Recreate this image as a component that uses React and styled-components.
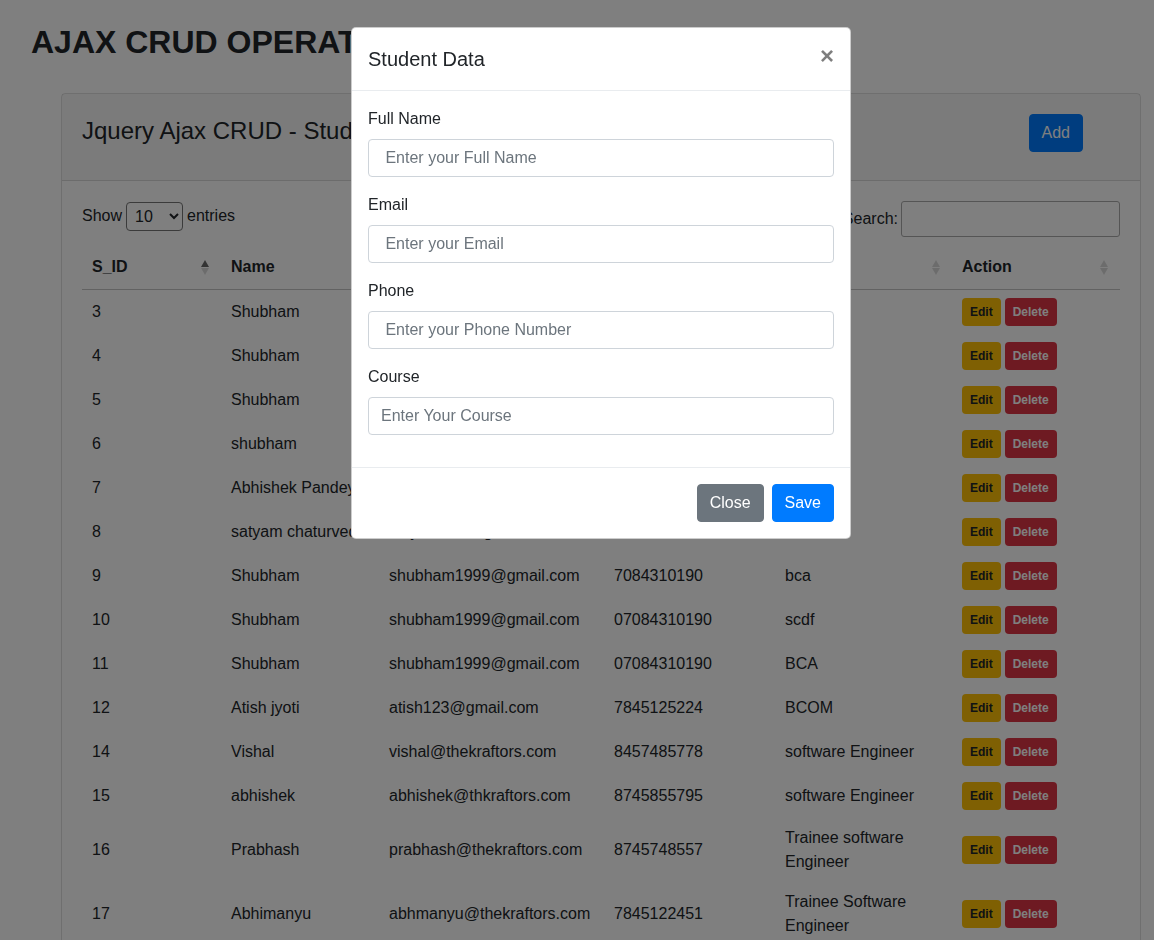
import React from 'react';
import styled, {createGlobalStyle} from 'styled-components';

const GlobalStyle = createGlobalStyle`
	body {
		margin: 0;
		background: #fff;
		color: #212529;
		font-family: "Liberation Sans", Arial, sans-serif;
		font-size: 16px;
		line-height: 1.5;
		overflow: hidden;
	}
	* { box-sizing: border-box; }
`;

const students = [
	{id: 3, name: 'Shubham', email: 'shubham1999@gmail.com', phone: '7084310190', course: 'bca'},
	{id: 4, name: 'Shubham', email: 'shubham1999@gmail.com', phone: '7084310190', course: 'bca'},
	{id: 5, name: 'Shubham', email: 'shubham1999@gmail.com', phone: '7084310190', course: 'BCA'},
	{id: 6, name: 'shubham', email: 'shubham1999@gmail.com', phone: '7084310190', course: 'bca'},
	{id: 7, name: 'Abhishek Pandey', email: 'abhishek@gmail.com', phone: '8745855795', course: 'BCA'},
	{id: 8, name: 'satyam chaturvedi', email: 'satyam123@gmail.com', phone: '7845125224', course: 'BCA'},
	{id: 9, name: 'Shubham', email: 'shubham1999@gmail.com', phone: '7084310190', course: 'bca'},
	{id: 10, name: 'Shubham', email: 'shubham1999@gmail.com', phone: '07084310190', course: 'scdf'},
	{id: 11, name: 'Shubham', email: 'shubham1999@gmail.com', phone: '07084310190', course: 'BCA'},
	{id: 12, name: 'Atish jyoti', email: 'atish123@gmail.com', phone: '7845125224', course: 'BCOM'},
	{id: 14, name: 'Vishal', email: 'vishal@thekraftors.com', phone: '8457485778', course: 'software Engineer'},
	{id: 15, name: 'abhishek', email: 'abhishek@thkraftors.com', phone: '8745855795', course: 'software Engineer'},
	{id: 16, name: 'Prabhash', email: 'prabhash@thekraftors.com', phone: '8745748557', course: 'Trainee software Engineer'},
	{id: 17, name: 'Abhimanyu', email: 'abhmanyu@thekraftors.com', phone: '7845122451', course: 'Trainee Software Engineer'},
];

const columns = [
	{label: 'S_ID', width: 139, sorted: true},
	{label: 'Name', width: 158},
	{label: 'Email', width: 225},
	{label: 'Phone', width: 171},
	{label: 'Course', width: 177},
	{label: 'Action', width: 168},
];

const Page = styled.div`
	padding-top: 23px;
`;

const PageTitle = styled.h2`
	margin: 0 0 0 31px;
	font-size: 32px;
	font-weight: 700;
	line-height: 1.2;
`;

const Card = styled.div`
	margin: 32px 0 0 61px;
	width: 1080px;
	border: 1px solid rgba(0,0,0,.125);
	border-radius: 4px;
`;

const CardHeader = styled.div`
	display: flex;
	align-items: flex-start;
	height: 87px;
	padding: 20px 20px 0;
	background: rgba(0,0,0,.03);
	border-bottom: 1px solid rgba(0,0,0,.125);
`;

const CardTitle = styled.h4`
	margin: 3px 0 0;
	font-size: 24px;
	font-weight: 400;
	line-height: 1.2;
`;

const AddButton = styled.button`
	margin: 0 37px 0 auto;
	padding: 6px 12px;
	background: #007bff;
	border: 1px solid #007bff;
	border-radius: 4px;
	color: #fff;
	font: inherit;
	line-height: 24px;
`;

const CardBody = styled.div`
	padding: 20px;
`;

const Controls = styled.div`
	display: flex;
	justify-content: space-between;
	align-items: center;
	height: 36px;
`;

const LengthLabel = styled.label`
	display: flex;
	align-items: center;
	margin-top: -6px;
	gap: 4px;
`;

const LengthSelect = styled.select`
	width: 57px;
	height: 29px;
	padding: 0 4px;
	font-family: "Liberation Sans", Arial, sans-serif;
	font-size: 16px;
	border: 1px solid #767676;
	border-radius: 4px;
	background: #fff;
	color: #212529;
`;

const SearchLabel = styled.label`
	display: flex;
	align-items: center;
	gap: 3px;
`;

const SearchInput = styled.input`
	width: 219px;
	height: 36px;
	padding: 5px;
	border: 1px solid #aaa;
	border-radius: 3px;
	font: inherit;
`;

const Table = styled.table`
	margin-top: 8px;
	width: 100%;
	table-layout: fixed;
	border-collapse: collapse;
`;

const Th = styled.th`
	padding: 10px 12px 10px 10px;
	text-align: left;
	font-weight: 700;
	line-height: 24px;
	border-bottom: 1px solid #c4c4c4;
`;

const HeadInner = styled.div`
	display: flex;
	align-items: center;
	justify-content: space-between;
`;

const SortIcon = styled.span`
	display: flex;
	flex-direction: column;
	gap: 1px;
	margin-top: 1px;
	&::before, &::after {
		content: '';
		width: 0;
		height: 0;
		border-left: 4px solid transparent;
		border-right: 4px solid transparent;
	}
	&::before {
		border-bottom: 7px solid rgba(0,0,0,${p => p.$active ? .6 : .15});
	}
	&::after {
		border-top: 7px solid rgba(0,0,0,.15);
	}
`;

const Td = styled.td`
	padding: 8px 10px;
	line-height: 24px;
	vertical-align: middle;
`;

const Actions = styled.div`
	display: flex;
	gap: 4px;
`;

const SmallButton = styled.button`
	padding: 5px 8px;
	border: 0;
	border-radius: 4px;
	font-family: "Liberation Sans", Arial, sans-serif;
	font-size: 12px;
	font-weight: 700;
	line-height: 18px;
	background: ${p => p.$variant === 'danger' ? '#dc3545' : '#ffc107'};
	color: ${p => p.$variant === 'danger' ? '#fff' : '#212529'};
`;

const Backdrop = styled.div`
	position: fixed;
	inset: 0;
	background: rgba(0,0,0,.5);
`;

const ModalBox = styled.div`
	position: fixed;
	top: 27px;
	left: 351px;
	width: 500px;
	background: #fff;
	border: 1px solid rgba(0,0,0,.2);
	border-radius: 5px;
`;

const ModalHeader = styled.div`
	display: flex;
	align-items: flex-start;
	padding: 16px;
	border-bottom: 1px solid #e9ecef;
`;

const ModalTitle = styled.h5`
	margin: 0;
	font-size: 20px;
	font-weight: 400;
	line-height: 1.5;
`;

const CloseX = styled.button`
	margin: -16px -16px -16px auto;
	padding: 16px;
	background: transparent;
	border: 0;
	font-family: "Liberation Sans", Arial, sans-serif;
	font-size: 24px;
	font-weight: 700;
	line-height: 1;
	color: #000;
	opacity: .5;
	text-shadow: 0 1px 0 #fff;
`;

const ModalBody = styled.div`
	padding: 16px;
`;

const FormGroup = styled.div`
	margin-bottom: 16px;
`;

const FieldLabel = styled.label`
	display: block;
	margin-bottom: 8px;
`;

const FieldInput = styled.input`
	display: block;
	width: 100%;
	height: 38px;
	padding: 6px 12px;
	border: 1px solid #ced4da;
	border-radius: 4px;
	font: inherit;
	color: #495057;
	&::placeholder { color: #6c757d; }
`;

const ModalFooter = styled.div`
	display: flex;
	justify-content: flex-end;
	gap: 8px;
	padding: 16px;
	border-top: 1px solid #e9ecef;
`;

const FooterButton = styled.button`
	padding: 6px 12px;
	border: 1px solid ${p => p.$primary ? '#007bff' : '#6c757d'};
	border-radius: 4px;
	background: ${p => p.$primary ? '#007bff' : '#6c757d'};
	color: #fff;
	font: inherit;
	line-height: 24px;
`;

const fields = [
	{label: 'Full Name', placeholder: ' Enter your Full Name'},
	{label: 'Email', placeholder: ' Enter your Email'},
	{label: 'Phone', placeholder: ' Enter your Phone Number'},
	{label: 'Course', placeholder: 'Enter Your Course'},
];

export default function App() {
	return (
		<>
			<GlobalStyle />
			<Page>
				<PageTitle>AJAX CRUD OPERATION</PageTitle>
				<Card>
					<CardHeader>
						<CardTitle>Jquery Ajax CRUD - Student Data</CardTitle>
						<AddButton>Add</AddButton>
					</CardHeader>
					<CardBody>
						<Controls>
							<LengthLabel>
								Show
								<LengthSelect defaultValue="10">
									<option>10</option>
									<option>25</option>
									<option>50</option>
									<option>100</option>
								</LengthSelect>
								entries
							</LengthLabel>
							<SearchLabel>
								Search:
								<SearchInput type="search" />
							</SearchLabel>
						</Controls>
						<Table>
							<colgroup>
								{columns.map(c => <col key={c.label} style={{width: c.width}} />)}
							</colgroup>
							<thead>
								<tr>
									{columns.map(c => (
										<Th key={c.label}>
											<HeadInner>
												<span>{c.label}</span>
												<SortIcon $active={c.sorted} />
											</HeadInner>
										</Th>
									))}
								</tr>
							</thead>
							<tbody>
								{students.map(s => (
									<tr key={s.id}>
										<Td>{s.id}</Td>
										<Td>{s.name}</Td>
										<Td>{s.email}</Td>
										<Td>{s.phone}</Td>
										<Td>{s.course}</Td>
										<Td>
											<Actions>
												<SmallButton>Edit</SmallButton>
												<SmallButton $variant="danger">Delete</SmallButton>
											</Actions>
										</Td>
									</tr>
								))}
							</tbody>
						</Table>
					</CardBody>
				</Card>
			</Page>
			<Backdrop />
			<ModalBox>
				<ModalHeader>
					<ModalTitle>Student Data</ModalTitle>
					<CloseX>×</CloseX>
				</ModalHeader>
				<ModalBody>
					{fields.map(f => (
						<FormGroup key={f.label}>
							<FieldLabel>{f.label}</FieldLabel>
							<FieldInput placeholder={f.placeholder} />
						</FormGroup>
					))}
				</ModalBody>
				<ModalFooter>
					<FooterButton>Close</FooterButton>
					<FooterButton $primary>Save</FooterButton>
				</ModalFooter>
			</ModalBox>
		</>
	);
}
